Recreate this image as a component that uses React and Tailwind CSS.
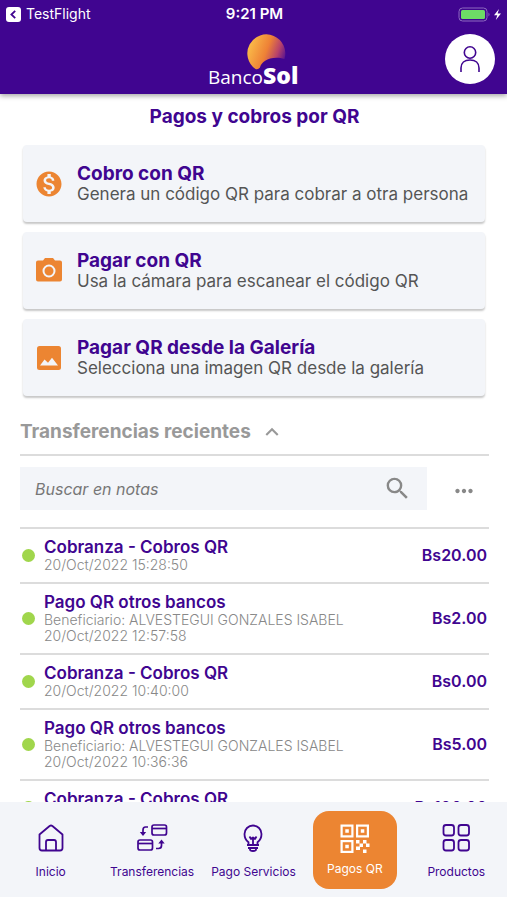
import { useState } from "react";
import { MdKeyboardArrowUp, MdMonetizationOn, MdMoreHoriz, MdSearch } from "react-icons/md";

function StatusBar() {
  return (
    <div className="grid h-7 grid-cols-3 items-center pr-[3px] pl-[5px] text-white">
      <a href="#testflight" className="flex items-center gap-1 text-sm leading-5">
        <svg width="17" height="17" viewBox="0 0 17 17" aria-hidden="true">
          <rect x="1" y="1" width="15" height="15" rx="3" fill="#fff" />
          <path d="M10.2 4.8 6.4 8.5l3.8 3.7" fill="none" stroke="#400590" strokeWidth="1.8" />
        </svg>
        TestFlight
      </a>
      <span className="text-center text-[15px] leading-5 font-semibold">9:21 PM</span>
      <svg className="justify-self-end" width="46" height="15" viewBox="0 0 46 15" aria-hidden="true">
        <rect x="1" y="1" width="28" height="13" rx="3.5" fill="none" stroke="#8d6bc0" strokeWidth="1" />
        <rect x="3" y="3" width="24" height="9" rx="1.5" fill="#6ddb66" />
        <path d="M30.5 5.5q2 2 0 4z" fill="#8d6bc0" />
        <path d="M41 2 36 8.300h3.300L37.800 13l5.200-6.500h-3.400z" fill="#fff" />
      </svg>
    </div>
  );
}

function Logo() {
  return (
    <svg className="overflow-visible" width="96" height="60" viewBox="0 0 96 60" role="img" aria-label="BancoSol">
      <defs>
        <linearGradient id="sun" x1="0" y1="0.3" x2="1" y2="0.65">
          <stop offset="0" stopColor="#fbc04a" />
          <stop offset="0.5" stopColor="#ee8136" />
          <stop offset="0.78" stopColor="#b8426a" />
          <stop offset="1" stopColor="#5a1490" />
        </linearGradient>
      </defs>
      <path d="M49.500 39A19 19 0 1 1 78.500 29C66 25 55 31 54 37.500Q52 40 49.500 39Z" fill="url(#sun)" />
      <text x="2" y="54" fill="#fff" fontFamily="'Open Sans', sans-serif" fontSize="19">
        Banco
        <tspan fontWeight="800" fontSize="23">Sol</tspan>
      </text>
    </svg>
  );
}

function CameraIcon() {
  return (
    <svg width="28" height="28" viewBox="0 0 28 28" aria-hidden="true">
      <path d="M3 3.500h5L10 1h8l2 2.500h5q2 0 2 2V22.500q0 2-2 2H3q-2 0-2-2V5.500q0-2 2-2Z" fill="#ec8532" />
      <circle cx="14" cy="14" r="5.500" fill="none" stroke="#f3f5f9" strokeWidth="2" />
    </svg>
  );
}

function ImageIcon() {
  return (
    <svg width="28" height="28" viewBox="0 0 28 28" aria-hidden="true">
      <rect x="2" y="2" width="24" height="24" rx="2.500" fill="#ec8532" />
      <path d="m5 21.500 4.500-6 3.500 3.300 4-5 6 7.700z" fill="#f3f5f9" />
    </svg>
  );
}

const actions = [
  {
    title: "Cobro con QR",
    text: "Genera un código QR para cobrar a otra persona",
    icon: <MdMonetizationOn size={30} className="-m-px" />,
  },
  { title: "Pagar con QR", text: "Usa la cámara para escanear el código QR", icon: <CameraIcon /> },
  {
    title: "Pagar QR desde la Galería",
    text: "Selecciona una imagen QR desde la galería",
    icon: <ImageIcon />,
  },
];

const transfers = [
  { title: "Cobranza - Cobros QR", date: "20/Oct/2022 15:28:50", amount: "Bs20.00" },
  {
    title: "Pago QR otros bancos",
    to: "Beneficiario: ALVESTEGUI GONZALES ISABEL",
    date: "20/Oct/2022 12:57:58",
    amount: "Bs2.00",
  },
  { title: "Cobranza - Cobros QR", date: "20/Oct/2022 10:40:00", amount: "Bs0.00" },
  {
    title: "Pago QR otros bancos",
    to: "Beneficiario: ALVESTEGUI GONZALES ISABEL",
    date: "20/Oct/2022 10:36:36",
    amount: "Bs5.00",
  },
  { title: "Cobranza - Cobros QR", date: "", amount: "Bs100.00" },
];

function HomeIcon() {
  return (
    <svg width="32" height="32" viewBox="0 0 32 32" fill="none" stroke="#400590" strokeWidth="1.800" strokeLinejoin="round" aria-hidden="true">
      <path d="M4.500 12.500 14.600 4q1.400-1 2.800 0l10.100 8.500V26q0 2.500-2.500 2.500H7Q4.500 28.500 4.500 26Z" />
      <path d="M11 28.500V20q0-2 2-2h6q2 0 2 2v8.500" />
    </svg>
  );
}

function TransferIcon() {
  return (
    <svg width="32" height="32" viewBox="0 0 32 32" fill="none" stroke="#400590" strokeWidth="1.700" aria-hidden="true">
      <rect x="16" y="3" width="14.500" height="10" rx="2" />
      <path d="M16 6.500h14.500" />
      <rect x="2" y="18" width="14.500" height="10" rx="2" />
      <path d="M2 21.500h14.500" />
      <path d="M12 5H9.500Q7 5 7 8v4" />
      <path d="m3.800 10 3.200 4 3.200-4z" fill="#400590" stroke="none" />
      <path d="M20 26.500h2.500q3 0 3-3V20" />
      <path d="m22.300 21.500 3.200-4 3.200 4z" fill="#400590" stroke="none" />
    </svg>
  );
}

function BulbIcon() {
  return (
    <svg width="32" height="32" viewBox="0 0 32 32" fill="none" stroke="#400590" strokeWidth="1.800" strokeLinejoin="round" aria-hidden="true">
      <path d="M11.500 22.500v-2.200C9 18.500 7.500 15.500 7.500 12a8.500 8.500 0 0 1 17 0c0 3.500-1.500 6.500-4 8.300v2.200" />
      <path d="M12.500 14.500 14 17l2-1.500 2 1.500 1.500-2.500M16 16v6.500" />
      <path d="M10 23h12M11 26h10" strokeWidth="2" />
      <path d="M13 27v.5q0 1.500 3 1.500t3-1.500V27" />
    </svg>
  );
}

function QrIcon() {
  return (
    <svg width="32" height="32" viewBox="0 0 32 32" fill="none" stroke="#fff" strokeWidth="2.200" aria-hidden="true">
      <rect x="2.600" y="2.600" width="10.800" height="10.800" />
      <rect x="18.100" y="2.600" width="10.800" height="10.800" />
      <rect x="2.600" y="18.100" width="10.800" height="10.800" />
      <g fill="#fff" stroke="none">
        <path d="M6.300 6.300h3.500v3.500H6.300zM21.800 6.300h3.500v3.500h-3.500zM6.300 21.800h3.500v3.500H6.300z" />
        <path d="M17 17h3.500v3.500H17zM24 17h3.500v3.500H24zM20.500 20.500H24V24h-3.500zM27 20.500h3.500V24H27zM17 23.500h4V27h-4zM24 26.500h3.500V30H24z" />
      </g>
    </svg>
  );
}

function GridIcon() {
  return (
    <svg width="32" height="32" viewBox="0 0 32 32" fill="none" stroke="#400590" strokeWidth="1.800" aria-hidden="true">
      <rect x="3.500" y="3" width="10.500" height="10.500" rx="2.500" />
      <rect x="18.500" y="3" width="10.500" height="10.500" rx="2.500" />
      <rect x="3.500" y="18" width="10.500" height="10.500" rx="2.500" />
      <rect x="18.500" y="18" width="10.500" height="10.500" rx="2.500" />
    </svg>
  );
}

const tabs = [
  { label: "Inicio", icon: <HomeIcon /> },
  { label: "Transferencias", icon: <TransferIcon /> },
  { label: "Pago Servicios", icon: <BulbIcon /> },
  { label: "Pagos QR", icon: <QrIcon />, active: true },
  { label: "Productos", icon: <GridIcon /> },
];

export default function App() {
  const [open, setOpen] = useState(true);

  return (
    <div className="flex h-screen flex-col overflow-hidden bg-white pb-[3px] font-[Inter,sans-serif] text-[#400590]">
      <header className="z-10 shrink-0 bg-[#400590] shadow-[0_2px_5px_rgba(0,0,0,0.35)]">
        <StatusBar />
        <div className="grid grid-cols-[1fr_auto_1fr] items-start px-3 pb-1">
          <span />
          <div className="pt-0.5">
            <Logo />
          </div>
          <button type="button" aria-label="Perfil" className="mt-1.5 flex size-[50px] items-center justify-center justify-self-end rounded-full bg-white">
            <svg width="28" height="32" viewBox="0 0 28 32" fill="none" stroke="#400590" strokeWidth="1.600" aria-hidden="true">
              <circle cx="14" cy="9.500" r="5.700" />
              <path d="M5 29v-4c0-5 3.500-8 9-8s9 3 9 8v4" />
            </svg>
          </button>
        </div>
      </header>

      <main className="min-h-0 flex-1 overflow-hidden pt-[11px] pr-[18px] pl-5">
        <h1 className="text-center text-[19px] leading-6 font-bold">Pagos y cobros por QR</h1>

        <div className="mt-4 flex flex-col gap-2.5 pr-1 pl-[3px]">
          {actions.map((action) => (
            <button
              key={action.title}
              type="button"
              className="flex h-[77px] items-center gap-3.5 rounded-sm bg-[#f3f5f9] px-3 text-left shadow-[0_2px_2px_rgba(0,0,0,0.22)]"
            >
              <span className="shrink-0 text-[#ec8532]">{action.icon}</span>
              <span className="flex flex-col whitespace-nowrap">
                <span className="text-[19px] leading-5 font-bold">{action.title}</span>
                <span className="text-[17px] leading-5 text-[#555]">{action.text}</span>
              </span>
            </button>
          ))}
        </div>

        <section>
          <h2 className="mt-3.5 border-b-2 border-[#dcdcdc]">
            <button
              type="button"
              aria-expanded={open}
              onClick={() => setOpen(!open)}
              className="flex h-11 items-center gap-2 text-[19px] font-bold text-[#999]"
            >
              Transferencias recientes
              <MdKeyboardArrowUp size={26} />
            </button>
          </h2>
          {open && (
            <>
              <div className="mt-[11px] flex items-center">
                <div className="flex h-[43px] flex-1 items-center bg-[#f3f5f9] px-[15px]">
                  <input
                    type="search"
                    aria-label="Buscar en notas"
                    placeholder="Buscar en notas"
                    className="h-full min-w-0 flex-1 bg-transparent text-base text-[#555] italic outline-none placeholder:text-[#777]"
                  />
                  <MdSearch size={29} className="text-[#888]" />
                </div>
                <button type="button" aria-label="Más opciones" className="ml-6 pt-1 pr-3 text-[#888]">
                  <MdMoreHoriz size={26} />
                </button>
              </div>

              <ul className="mt-[17px]">
                {transfers.map((item, index) => (
                  <li key={index} className="flex items-center border-t-2 border-[#dcdcdc] pt-2 pr-0.5 pb-[9px]">
                    <span className="mx-0.5 size-[13px] shrink-0 rounded-full bg-[#a0d64c]" />
                    <div className="ml-[7px] flex-1 text-sm leading-4 font-light text-[#888]">
                      <h3 className="text-[17px] leading-5 font-semibold text-[#400590]">{item.title}</h3>
                      {item.to && <p>{item.to}</p>}
                      <p className="min-h-4">{item.date}</p>
                    </div>
                    <span className="text-base leading-5 font-semibold">{item.amount}</span>
                  </li>
                ))}
              </ul>
            </>
          )}
        </section>
      </main>

      <nav className="grid h-[95px] shrink-0 grid-cols-5 bg-[#f3f5f9]">
        {tabs.map((tab) => (
          <a
            key={tab.label}
            href="#"
            aria-current={tab.active ? "page" : undefined}
            className={
              tab.active
                ? "mx-auto mt-[9px] flex h-[78px] w-[84px] flex-col items-center gap-1.5 rounded-2xl bg-[#ec8532] pt-3 text-xs text-white"
                : "flex flex-col items-center gap-2.5 pt-5 text-xs whitespace-nowrap"
            }
          >
            {tab.icon}
            {tab.label}
          </a>
        ))}
      </nav>
    </div>
  );
}
